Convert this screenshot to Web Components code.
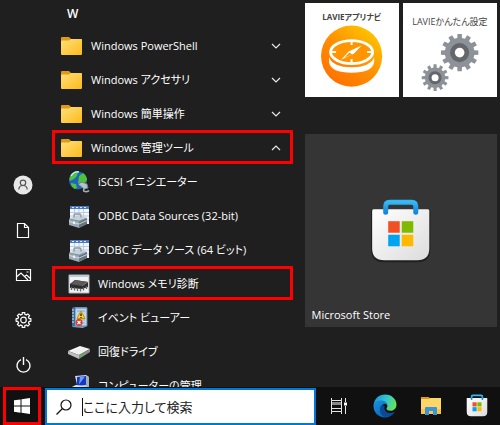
<!DOCTYPE html>
<html lang="ja">
<head>
<meta charset="utf-8">
<meta name="viewport" content="width=device-width, initial-scale=1">
<title>スタート メニュー</title>
<style>
  html, body { height: 100%; margin: 0; }
  body {
    background: #1f1f1f;
    color: #fff;
    font: 11px/16px "Open Sans", "Noto Sans CJK JP", sans-serif;
    font-feature-settings: "palt";
  }
</style>
</head>
<body>
<desktop-shell>
  <nav-rail slot="rail">
    <rail-button icon="user" label="アカウント"></rail-button>
    <rail-button icon="document" label="ドキュメント"></rail-button>
    <rail-button icon="picture" label="ピクチャ"></rail-button>
    <rail-button icon="settings" label="設定"></rail-button>
    <rail-button icon="power" label="電源"></rail-button>
  </nav-rail>

  <app-list slot="apps" heading="W">
    <app-row icon="folder" folder="closed">Windows PowerShell</app-row>
    <app-row icon="folder" folder="closed">Windows アクセサリ</app-row>
    <app-row icon="folder" folder="closed">Windows 簡単操作</app-row>
    <app-row icon="folder" folder="open" marked>Windows 管理ツール</app-row>
    <app-row icon="iscsi">iSCSI イニシエーター</app-row>
    <app-row icon="odbc">ODBC Data Sources (32-bit)</app-row>
    <app-row icon="odbc">ODBC データ ソース (64 ビット)</app-row>
    <app-row icon="memory" marked>Windows メモリ診断</app-row>
    <app-row icon="event">イベント ビューアー</app-row>
    <app-row icon="drive">回復ドライブ</app-row>
    <app-row icon="computer">コンピューターの管理</app-row>
  </app-list>

  <tile-grid slot="tiles">
    <app-tile art="navi" kind="navi">LAVIEアプリナビ</app-tile>
    <app-tile art="gears" kind="gears">LAVIEかんたん設定</app-tile>
    <app-tile art="storeTile" kind="large">Microsoft Store</app-tile>
  </tile-grid>

  <task-bar slot="taskbar">
    <task-button slot="start" icon="windows" label="スタート" marked></task-button>
    <search-box slot="search" hint="ここに入力して検索"></search-box>
    <task-button icon="taskview" label="タスク ビュー"></task-button>
    <task-button icon="edge" label="Microsoft Edge"></task-button>
    <task-button icon="explorer" label="エクスプローラー"></task-button>
    <task-button icon="store" label="Microsoft Store"></task-button>
  </task-bar>
</desktop-shell>

<script>
  // Outline of a toothed wheel: each tooth is a trapezoid on the root circle.
  function gear(cx, cy, root, tip, teeth) {
    const step = Math.PI * 2 / teeth, pts = [];
    for (let i = 0; i < teeth; i++) {
      const a = i * step - Math.PI / 2;
      for (const [r, k] of [[root, -.3], [tip, -.22], [tip, .22], [root, .3]])
        pts.push((cx + r * Math.cos(a + k * step)).toFixed(2) + ' ' + (cy + r * Math.sin(a + k * step)).toFixed(2));
    }
    return 'M' + pts.join('L') + 'Z';
  }

  const bag = `
    <defs>
      <linearGradient id="b" x1="0" y1="0" x2="1" y2="1"><stop offset="0" stop-color="#fff"/><stop offset="1" stop-color="#dcdcdc"/></linearGradient>
      <linearGradient id="h" x1="0" y1="0" x2="0" y2="1"><stop offset="0" stop-color="#35b8f5"/><stop offset="1" stop-color="#1786dc"/></linearGradient>
    </defs>
    <path d="M1 12h59v39q0 13-13 13H14Q1 64 1 51z" fill="#111" opacity=".6"/>
    <path d="M2 12.500q0-1.500 1.500-1.500h54q1.500 0 1.500 1.500V50q0 12-12 12H14Q2 62 2 50z" fill="url(#b)"/>
    <path d="M15.500 14V8q0-4 4-4h22q4 0 4 4v6" fill="none" stroke="url(#h)" stroke-width="5" stroke-linecap="round" stroke-linejoin="round"/>
    <path fill="#f25022" d="M18 23h11.500v11.500H18z"/><path fill="#7fba00" d="M31.500 23H43v11.500H31.500z"/>
    <path fill="#00a4ef" d="M18 36.500h11.500V48H18z"/><path fill="#ffb900" d="M31.500 36.500H43V48H31.500z"/>`;

  const ICONS = {
    folder: [22, 20, `<defs><linearGradient id="f" x1="0" y1="0" x2="1" y2="1"><stop offset="0" stop-color="#ffe07a"/><stop offset="1" stop-color="#fcba1c"/></linearGradient></defs>
      <path d="M0 4V2q0-1 1-1h7l2 2h10q1 0 1 1v4H0z" fill="#e09a12"/>
      <path d="M0 5.500q0-1 1-1h7L10 3h10q1 0 1 1v14q0 1-1 1H1q-1 0-1-1z" fill="url(#f)"/>`],
    iscsi: [22, 22, `<circle cx="10" cy="9.500" r="9" fill="#1d62c4"/><path d="M4 3q4-3 6-2l-1 4-3 3-4 2Q0 7 4 3zM11 5l4-3q4 3 4 7l-4 5-5-2zM3 12l5 1 1 4-2 1q-4-2-4-6z" fill="#4fc239"/><path d="M3 5q3-5 8-4" stroke="#b9ecff" fill="none" stroke-width="1.500"/>
      <path d="M10 13l4-2 5 2 1 4-4 1z" fill="#b4c3c8" stroke="#6b7d84"/><path d="M17 17q-3 3 0 3.500t4-1" fill="none" stroke="#9fb3b6" stroke-width="1.500"/>`],
    odbc: [22, 23, `<path d="M2 1h19v18H2z" fill="#f1f6fc"/><path d="M2 1h19v3H2z" fill="#4a7cc4"/><path d="M4 2.500h2m2 0h2m2 0h2m2 0h2" stroke="#d9e8fb"/><path d="M6.500 4v8M11 4v8M15.500 4v14M2 7.500h19M2 11h19M15 15h6" stroke="#bccbdd"/>
      <path d="M1 14l9-3 9 2v6l-8 4-10-3z" fill="#8597a3"/><path d="M1 13.500l9-3 9 2-8 3z" fill="#c5d1d8"/><path d="M1 14.500l10 2.500v5.500L1 19.500z" fill="#9cadb8"/><path d="M11 17l8-3.500v5.500l-8 3.500z" fill="#64757f"/>
      <path d="M6 12.500v-2q0-1.500 1.500-1.500h4q1.500 0 1.500 1.500v2" fill="none" stroke="#8b9aa3" stroke-width="1.400"/><path d="M1 16.500l10 2.500 8-3.500" fill="none" stroke="#dbe4e9" stroke-width=".8"/><path d="M5 16.500h2v2.500H5z" fill="#eef2f4"/>`],
    memory: [22, 20, `<path d="M1 1h20v18H1z" fill="#f3f3f3" stroke="#a9b4be"/><path d="M1 1h20v2H1z" fill="#b9cbd9"/>
      <path d="M2 10l5-4 13 2v5l-6 2-12-1z" fill="#2d2d2d"/><path d="M2 10l5-4 13 2-6 4z" fill="#5b5b5b"/><path d="M3.500 13v3m3-2.500v3m3-2.500v3m3-2.500v3m3-4v3m3-4.500v3" stroke="#666" stroke-width="1.300"/><path d="M14 12l6-4" stroke="#888" stroke-width=".7"/>`],
    event: [22, 24, `<path d="M4 2l4-1h11v19l-4 2-11-1z" fill="#7da4ca"/><path d="M7 2h12v18H7z" fill="#c1d8eb" stroke="#5b84ab"/><path d="M9 5h8M9 14h8M9 17h8" stroke="#86a9c9"/><path d="M4 2l3-1v19l-3 1z" fill="#3e6d9d"/><path d="M4 4h2M4 7h2M4 10h2M4 13h2M4 16h2" stroke="#dae9f4"/>
      <path d="M13 5l4 7.500H9z" fill="#ffd21c" stroke="#c98f00"/><path d="M13 7.500v2.500m0 1v1" stroke="#222" stroke-width="1.300"/><circle cx="11" cy="16.500" r="3.500" fill="#d83a2d"/><path d="M9.500 15l3 3m0-3l-3 3" stroke="#fff" stroke-width="1.200"/>`],
    drive: [22, 14, `<path d="M0 6L12 1l10 3-11 6z" fill="#f0f0f0"/><path d="M0 6l11 4v4L0 9z" fill="#bdbdbd"/><path d="M11 10l11-6v3L11 14z" fill="#8b8b8b"/><path d="M3 6l9-4" stroke="#fff"/><path d="M12 11.500l3-1.500" stroke="#2ed13a" stroke-width="1.800"/>`],
    computer: [22, 24, `<path d="M7 2l11-1 3 2v11l-11 1z" fill="#d4d9dd"/><path d="M9 3l9-1v9l-9 1z" fill="#1239c6"/><path d="M12 3l5-.5-6 8z" fill="#6e9bf8"/><path d="M18 2l3 1v11l-3-2z" fill="#a7afb5"/><path d="M0 15l8-4 13 2v7l-11 3-10-3z" fill="#8497a5"/><path d="M0 15l8-4 13 2-11 5z" fill="#dbe4ea"/>`],
    user: [20, 20, `<circle cx="10" cy="10" r="9.500" fill="#e8e8e8"/><circle cx="10" cy="7.800" r="2.700" fill="none" stroke="#555" stroke-width="1.200"/><path d="M5.800 14.500q.2-4 4.200-4t4.200 4" fill="none" stroke="#555" stroke-width="1.200"/>`],
    document: [20, 20, `<path d="M4.500 3.500h7l4 4v10h-11zM11.500 3.500v4h4" fill="none" stroke="#fff" stroke-width="1.200"/>`],
    picture: [20, 20, `<path d="M3.500 4.500h14v11h-14z" fill="none" stroke="#fff" stroke-width="1.200"/><path d="M4 11.500l4-3.500 7 7M11.500 11.500l2-1.500 4 3.500" fill="none" stroke="#fff" stroke-width="1.200"/><path d="M13.500 6.500h2v1h-2z" fill="#fff"/>`],
    settings: [20, 20, `<path d="${gear(10.5, 10, 5.8, 7.5, 8)}" fill="none" stroke="#fff" stroke-width="1.200" stroke-linejoin="round"/><circle cx="10.500" cy="10" r="2.800" fill="none" stroke="#fff" stroke-width="1.200"/>`],
    power: [20, 20, `<path d="M8 4.600a6.500 6.500 0 1 0 5 0M10.500 2v8" fill="none" stroke="#fff" stroke-width="1.400"/>`],
    chevron: [10, 6, `<path d="M1 1l4 4 4-4" fill="none" stroke="#e8e8e8" stroke-width="1.200"/>`],
    windows: [16, 16, `<path d="M0 2.300L6.500 1.400v6.200H0zM7.500 1.200L16 0v7.600H7.500zM0 8.500h6.500v6.200L0 13.800zM7.500 8.500H16V16l-8.500-1.200z" fill="#fff"/>`],
    search: [16, 16, `<circle cx="10" cy="6" r="5" fill="none" stroke="#111" stroke-width="1.200"/><path d="M6.500 9.500L.5 15.500" stroke="#111" stroke-width="1.300"/>`],
    taskview: [16, 16, `<path d="M.5 0v2.500h10V0M.5 16v-2.500h10V16" fill="none" stroke="#e8e8e8"/><path d="M1 4h9v3H1z" fill="#888"/><path d="M.5 2.500v11M10.500 2.500v11M.5 10.500h10" stroke="#e8e8e8"/><path d="M14.500 0v4m0 4v8" stroke="#e8e8e8"/><path d="M13 4.500h3v3h-3z" fill="#fff"/>`],
    edge: [24, 24, `<defs>
        <linearGradient id="t" x1="0" y1="0.300" x2="1" y2=".6"><stop offset="0" stop-color="#1795d9"/><stop offset=".5" stop-color="#31c6cf"/><stop offset="1" stop-color="#6be355"/></linearGradient>
        <linearGradient id="d" x1="0" y1="0" x2="1" y2="1"><stop offset="0" stop-color="#1596e3"/><stop offset="1" stop-color="#0b4fa3"/></linearGradient>
      </defs>
      <path d="M.5 11C1.500 4.500 6 .5 12 .5c7 0 11.500 5 11.500 10 0 4-3 6.300-6 6.300-2.500 0-4-1-4-2.300 0-.8.900-1.200.9-2.800 0-2-2.400-4.200-5.900-4.200C4.500 7.500 1.500 9 .5 11z" fill="url(#t)"/>
      <path d="M.5 12C.5 8.500 4 6.500 8 6.500c3.500 0 6.400 2.200 6.400 5-1-1.300-2.400-1.700-3.900-1.200-2.500 1-3.500 3.500-2.500 6.700 1.200 3.500 5 5 8.500 3.500l5-2.500C19.500 21.500 16 23.500 12 23.500 5.500 23.500.5 18.500.5 12z" fill="url(#d)"/>
      <path d="M9.500 11C6 13 6 19 10.500 22.500c4.500 1.500 9-1 11.500-4.700-3.500 1.700-7.500 1.700-9.500-.8-1.300-1.600-1.500-3.500-.5-4.500z" fill="#0b4a93"/>`],
    explorer: [22, 20, `<path d="M1 1h8l1 2H1z" fill="#e09a12"/><path d="M1 3h8l1-1h11v16H1z" fill="#ffd766"/><path d="M1 13h20v5H1z" fill="#fbc63c"/><path d="M5 19v-7q0-1 1-1h10q1 0 1 1v7h-4v-4H9v4z" fill="#3a93dd"/>`],
    store: [61, 65, bag],
    storeTile: [192, 192, `<g transform="translate(65 64)">${bag}</g>`],
    navi: [94, 94, `<defs><linearGradient id="o" x1=".1" y1="1" x2=".9" y2="0"><stop offset="0" stop-color="#ff6a00"/><stop offset=".5" stop-color="#ff9000"/><stop offset="1" stop-color="#ffce00"/></linearGradient></defs>
      <circle cx="46.500" cy="53" r="30.500" fill="url(#o)"/>
      <path d="M24 54q4 10 22.500 10T69 54v5q-2 10.500-22.500 10.500T24 59z" fill="#fff"/>
      <ellipse cx="46.500" cy="49" rx="21" ry="11.500" fill="#ff9500" stroke="#fff" stroke-width="2.800"/>
      <path d="M46.500 38v4m0 14v4M27 49h4m31 0h4" stroke="#fff" stroke-width="2"/>
      <path d="M36 56.500l7.500-8L56.500 42.500l-7.500 8z" fill="#fff"/><path d="M39 54.500l5.500-5 2.500 2z" fill="#ff9500"/>`],
    gears: [94, 94, `<path d="${gear(56.5, 49.5, 14.8, 18.8, 12)}" fill="#8d9198"/><circle cx="56.500" cy="49.500" r="9.500" fill="#64666a"/><circle cx="56.500" cy="49.500" r="4.800" fill="#fff"/>
      <path d="${gear(32, 74.5, 10.2, 13.4, 12)}" fill="#8d9198"/><circle cx="32" cy="74.500" r="6.500" fill="#64666a"/><circle cx="32" cy="74.500" r="3.500" fill="#fff"/>`]
  };

  class ShadowElement extends HTMLElement {
    constructor() {
      super();
      this.attachShadow({ mode: 'open' });
    }
    connectedCallback() {
      this.shadowRoot.innerHTML = `<style>*{box-sizing:border-box}button,input{font:inherit;color:inherit;font-feature-settings:inherit;margin:0;padding:0;border:0;background:none}${this.css()}</style>${this.html()}`;
    }
    attr(name) { return this.getAttribute(name) || ''; }
  }

  customElements.define('ui-icon', class extends ShadowElement {
    css() { return `:host{display:block;flex:none}svg{display:block;width:100%;height:auto}`; }
    html() {
      const [w, h, body] = ICONS[this.attr('name')];
      return `<svg viewBox="0 0 ${w} ${h}" aria-hidden="true">${body}</svg>`;
    }
  });

  customElements.define('desktop-shell', class extends ShadowElement {
    css() {
      return `:host{display:flex;flex-direction:column;height:100vh}
        main{flex:1;min-height:0;overflow:hidden;display:grid;grid-template-columns:40px minmax(0,5fr) minmax(0,4fr);grid-template-rows:minmax(0,1fr);column-gap:12px;padding-right:3px}`;
    }
    html() { return `<main><slot name="rail"></slot><slot name="apps"></slot><slot name="tiles"></slot></main><slot name="taskbar"></slot>`; }
  });

  customElements.define('nav-rail', class extends ShadowElement {
    css() { return `:host{display:block}nav{height:100%;display:flex;flex-direction:column;justify-content:flex-end}`; }
    html() { return `<nav aria-label="ユーザー"><slot></slot></nav>`; }
  });

  customElements.define('rail-button', class extends ShadowElement {
    css() { return `:host{display:block}button{display:flex;width:46px;height:45px;align-items:center;justify-content:center}ui-icon{width:20px}`; }
    html() { return `<button aria-label="${this.attr('label')}"><ui-icon name="${this.attr('icon')}"></ui-icon></button>`; }
  });

  customElements.define('app-list', class extends ShadowElement {
    css() { return `:host{display:block;min-height:0}h2{margin:0;height:28px;padding-left:15px;font:inherit;font-size:12px;font-weight:600;line-height:28px}`; }
    html() { return `<h2>${this.attr('heading')}</h2><slot></slot>`; }
  });

  customElements.define('app-row', class extends ShadowElement {
    css() {
      return `:host{display:block}
        button{display:flex;align-items:center;width:100%;height:34px;padding:2px 12px 0 16px;gap:8px;text-align:left;white-space:nowrap}
        button.folder{padding-left:9px}
        :host([marked]) button{box-shadow:inset 0 0 0 3px #f00}
        .art{width:22px}
        .label{flex:1}
        .chev{width:10px}
        .open .chev{transform:rotate(180deg)}`;
    }
    html() {
      const state = this.attr('folder');
      const icon = `<ui-icon class="art" name="${this.attr('icon')}"></ui-icon><span class="label"><slot></slot></span>`;
      return state
        ? `<button class="folder ${state}" aria-expanded="${state === 'open'}">${icon}<ui-icon class="chev" name="chevron"></ui-icon></button>`
        : `<button>${icon}</button>`;
    }
  });

  customElements.define('tile-grid', class extends ShadowElement {
    css() { return `:host{display:grid;grid-template-columns:1fr 1fr;column-gap:4px;row-gap:37px;align-content:start;padding-top:3px}`; }
    html() { return `<slot></slot>`; }
  });

  customElements.define('app-tile', class extends ShadowElement {
    css() {
      return `:host{display:block;min-width:0}
        :host([kind=large]){grid-column:1/-1}
        button{display:grid;width:100%;aspect-ratio:1;background:#fff;color:#444;text-align:center;white-space:nowrap;font-size:9px;line-height:12px}
        ui-icon,span{grid-area:1/1}
        span{align-self:start;padding-top:8px}
        :host([kind=navi]) span{font-weight:700;font-size:8px}
        :host([kind=gears]) span{padding-top:13px}
        :host([kind=large]) button{background:#353535;color:#fff;text-align:left;font-size:11px;line-height:16px}
        :host([kind=large]) span{align-self:end;padding:0 7px 4px}`;
    }
    html() { return `<button><ui-icon name="${this.attr('art')}"></ui-icon><span><slot></slot></span></button>`; }
  });

  customElements.define('task-bar', class extends ShadowElement {
    css() {
      return `:host{display:flex;height:38px;background:#101010;padding-left:3px}
        .apps{display:flex;flex:none}
        ::slotted([slot=search]){flex:1;min-width:0;margin-left:4px}`;
    }
    html() { return `<slot name="start"></slot><slot name="search"></slot><div class="apps"><slot></slot></div>`; }
  });

  customElements.define('task-button', class extends ShadowElement {
    css() {
      return `:host{display:block;width:46px}
        :host([marked]){width:38px}
        button{display:flex;width:100%;height:100%;align-items:center;justify-content:center}
        :host([marked]) button{box-shadow:inset 0 0 0 3px #f00}
        ui-icon{width:22px}
        :host([icon=windows]) ui-icon,:host([icon=taskview]) ui-icon{width:16px}
        :host([icon=edge]) ui-icon{width:24px}`;
    }
    html() { return `<button aria-label="${this.attr('label')}"><ui-icon name="${this.attr('icon')}"></ui-icon></button>`; }
  });

  customElements.define('search-box', class extends ShadowElement {
    css() {
      return `:host{display:block}
        label{display:flex;align-items:center;height:37px;margin-top:1px;padding:0 9px;gap:10px;background:#fff;border:2px solid #0078d7;color:#111}
        ui-icon{width:16px}
        input{flex:1;min-width:0;height:18px;outline:0;border-left:1px solid #111;font-size:13px}
        input::placeholder{color:#222;opacity:1}`;
    }
    html() { return `<label><ui-icon name="search"></ui-icon><input type="text" aria-label="検索" placeholder="${this.attr('hint')}"></label>`; }
  });
</script>
</body>
</html>
